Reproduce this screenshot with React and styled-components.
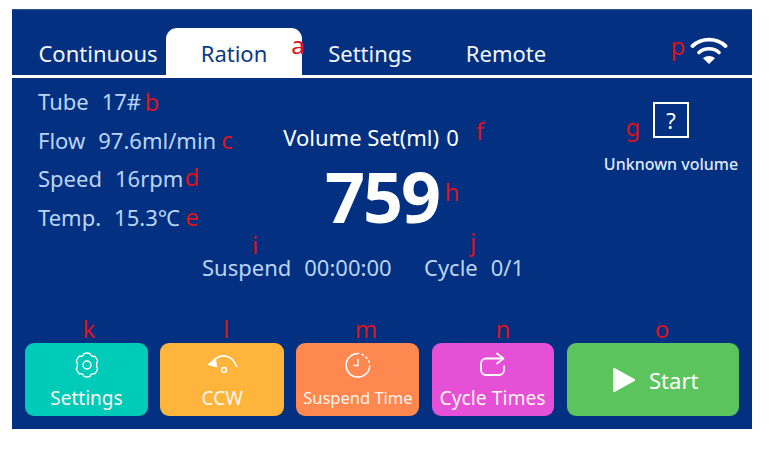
import React from 'react';
import styled, { createGlobalStyle } from 'styled-components';

const Global = createGlobalStyle`
  html, body { margin: 0; padding: 0; background: #fff; }
  body { font-family: "Noto Sans", "Noto Sans CJK SC", sans-serif; }
`;
const Screen = styled.div`
  position: relative; box-sizing: border-box; width: 740px; height: 420px; margin: 9px 0 0 12px;
  background: #033080; border-top: 1px solid #2c5590; display: flex; flex-direction: column; overflow: hidden;
`;
const TabBar = styled.div`
  box-sizing: border-box; display: flex; align-items: flex-end; padding-left: 18px;
  border-bottom: 3px solid #fff; height: 68px; flex: none;
`;
const Tab = styled.div`
  width: 136px; height: 47px; display: flex; align-items: center; justify-content: center;
  font-size: 22px; padding-top: 3px; box-sizing: border-box;
  color: ${p => (p.$active ? '#0b3a85' : '#f2f6fc')};
  background: ${p => (p.$active ? '#fff' : 'transparent')};
  border-radius: 11px 11px 0 0;
`;
const WifiSlot = styled.div`
  margin-left: auto; margin-right: 24px; align-self: flex-start; margin-top: 27px; line-height: 0;
`;
const Body = styled.div`
  flex: 1; display: flex; flex-direction: column; min-height: 0;
`;
const Top = styled.div`
  display: grid; grid-template-columns: 213px 240px 1fr; padding: 9px 0 0 26px; height: 155px; box-sizing: border-box;
`;
const InfoList = styled.div`
  display: flex; flex-direction: column; gap: 10.7px;
`;
const InfoRow = styled.div`
  height: 28px; line-height: 28px; font-size: 22px; color: #bcd4f5; display: flex; gap: 13px; white-space: nowrap;
`;
const Center = styled.div`
  display: flex; flex-direction: column; align-items: center; padding-top: 36px;
`;
const VolumeLine = styled.div`
  font-size: 22px; line-height: 28px; color: #fff; white-space: nowrap; display: flex; gap: 7px;
`;
const Big = styled.div`
  font-size: 70px; line-height: 80px; font-weight: 700; color: #fff; margin: 5px 0 0 22px; letter-spacing: -2px;
`;
const Unknown = styled.div`
  display: flex; flex-direction: column; align-items: center; padding-top: 15px; margin-left: 110px; width: 140px;
`;
const QBox = styled.div`
  width: 36px; height: 36px; flex: none; box-sizing: border-box; border: 2px solid #fff; color: #fff; font-size: 22px;
  display: flex; align-items: center; justify-content: center;
`;
const UnknownLabel = styled.div`
  font-size: 16px; font-weight: 500; line-height: 22px; color: #dfeafb; margin-top: 15px; white-space: nowrap;
`;
const Status = styled.div`
  display: flex; padding-left: 190px; margin-top: 20px; font-size: 22px; line-height: 28px; color: #bcd4f5; white-space: nowrap;
`;
const StatusItem = styled.div`
  display: flex; gap: 13px; width: ${p => p.$w}px;
`;
const Buttons = styled.div`
  margin-top: auto; padding: 0 13px 13px; display: grid; grid-template-columns: 123px 124px 123px 122px 173px; gap: 12.2px;
`;
const ActionButton = styled.div`
  height: 73px; border-radius: 9px; background: ${p => p.$bg}; color: #fdf6ee; display: flex; flex-direction: column;
  align-items: center; justify-content: flex-start; padding-top: 9px; box-sizing: border-box; white-space: nowrap;
`;
const IconSlot = styled.div`
  height: 26px; line-height: 0;
`;
const ButtonLabel = styled.div`
  font-size: ${p => p.$size || 19}px; line-height: 26px; margin-top: 7px;
`;
const StartButton = styled.div`
  height: 73px; border-radius: 9px; background: #5cc45c; color: #fff; display: flex; align-items: center; justify-content: center;
  gap: 13px; font-size: 22px; padding-left: 5px; margin-left: 1px; box-sizing: border-box;
`;
const Mark = styled.span`
  position: absolute; left: ${p => p.$x}px; top: ${p => p.$y}px; transform: translate(-50%, calc(-50% - 1.5px));
  color: #d9141e; font-size: 24px; line-height: 1; font-family: "Noto Sans", sans-serif;
`;

const Wifi = () => (
  <svg width="38" height="28" viewBox="0 0 38 28" fill="none" stroke="#fff" strokeLinecap="round">
    <path d="M2.5 9C11.5 .5 26.5 .5 35.5 9" strokeWidth="3.8" />
    <path d="M9 15.5C14.5 10.5 23.5 10.5 29 15.5" strokeWidth="3.6" />
    <path d="M19 27L13 21.2C16.5 18.4 21.5 18.4 25 21.2Z" fill="#fff" stroke="none" />
  </svg>
);
const Gear = () => (
  <svg width="26" height="26" viewBox="0 0 26 26" fill="none" stroke="#fff" strokeWidth="1.4" strokeLinejoin="round">
    <path d="M10 1.6C11.5 1 14.5 1 16 1.6C16.4 3.6 18.6 4.8 20.6 4.2C21.8 5.2 23.2 7.6 23.6 9.2C22.2 10.6 22.2 15.4 23.6 16.8C23.2 18.4 21.8 20.8 20.6 21.8C18.6 21.2 16.4 22.4 16 24.4C14.5 25 11.5 25 10 24.4C9.6 22.4 7.4 21.2 5.4 21.8C4.2 20.8 2.8 18.4 2.4 16.8C3.8 15.4 3.8 10.6 2.4 9.2C2.8 7.6 4.2 5.2 5.4 4.2C7.4 4.8 9.6 3.6 10 1.6Z" />
    <circle cx="13" cy="13" r="4" />
  </svg>
);
const Ccw = () => (
  <svg width="34" height="26" viewBox="0 0 34 26" fill="none" stroke="#fff">
    <path d="M9 8C16 1.5 27 2 32 15" strokeWidth="1.6" />
    <path d="M3 12.5L10.5 6.5L11.5 15Z" fill="#fff" stroke="#fff" strokeWidth="1" strokeLinejoin="round" />
    <circle cx="19" cy="18" r="2.4" strokeWidth="1.5" />
  </svg>
);
const Clock = () => (
  <svg width="26" height="26" viewBox="0 0 26 26" fill="none" stroke="#fff" strokeWidth="1.6" strokeLinecap="round">
    <path d="M13.5 1.5A11.8 11.8 0 1 0 24.7 14" />
    <path d="M17 2.3L18.2 3M21 5.2L21.8 6.2M23.8 9L24.2 10.2" />
    <path d="M13 7.5V13.5H9" strokeWidth="1.4" />
  </svg>
);
const Cycle = () => (
  <svg width="27" height="26" viewBox="0 0 27 26" fill="none" stroke="#fff" strokeWidth="1.8" strokeLinejoin="round">
    <path d="M25 13.5v4.5a5 5 0 0 1-5 5H7a5 5 0 0 1-5-5v-6.5a5 5 0 0 1 5-5h17" />
    <path d="M18 1.5L24.5 6.5L18 11.5" strokeLinecap="round" />
  </svg>
);
const Play = () => (
  <svg width="24" height="26" viewBox="0 0 24 26">
    <path d="M2 2L22 13L2 24Z" fill="#fff" stroke="#fff" strokeWidth="2" strokeLinejoin="round" />
  </svg>
);

const info = [['Tube', '17#'], ['Flow', '97.6ml/min'], ['Speed', '16rpm'], ['Temp.', '15.3℃']];
const marks = [
  ['a', 286, 36], ['b', 140, 93], ['c', 215, 131], ['d', 180, 168], ['e', 180, 208], ['f', 468, 122],
  ['g', 621, 118], ['h', 440, 183], ['i', 243, 236], ['j', 461, 233], ['k', 77, 320], ['l', 214, 320],
  ['m', 354, 320], ['n', 491, 320], ['o', 650, 320], ['p', 666, 37],
];

export default function App() {
  return (
    <>
      <Global />
      <Screen>
        <TabBar>
          <Tab>Continuous</Tab>
          <Tab $active>Ration</Tab>
          <Tab>Settings</Tab>
          <Tab>Remote</Tab>
          <WifiSlot><Wifi /></WifiSlot>
        </TabBar>
        <Body>
          <Top>
            <InfoList>
              {info.map(([k, v]) => (
                <InfoRow key={k}><span>{k}</span><span>{v}</span></InfoRow>
              ))}
            </InfoList>
            <Center>
              <VolumeLine><span>Volume Set(ml)</span><span>0</span></VolumeLine>
              <Big>759</Big>
            </Center>
            <Unknown>
              <QBox>?</QBox>
              <UnknownLabel>Unknown volume</UnknownLabel>
            </Unknown>
          </Top>
          <Status>
            <StatusItem $w={222}><span>Suspend</span><span>00:00:00</span></StatusItem>
            <StatusItem $w={110}><span>Cycle</span><span>0/1</span></StatusItem>
          </Status>
          <Buttons>
            <ActionButton $bg="#00cbb9"><IconSlot><Gear /></IconSlot><ButtonLabel>Settings</ButtonLabel></ActionButton>
            <ActionButton $bg="#ffb43c"><IconSlot><Ccw /></IconSlot><ButtonLabel>CCW</ButtonLabel></ActionButton>
            <ActionButton $bg="#ff8750"><IconSlot><Clock /></IconSlot><ButtonLabel $size={16.5}>Suspend Time</ButtonLabel></ActionButton>
            <ActionButton $bg="#e650d6"><IconSlot><Cycle /></IconSlot><ButtonLabel $size={19.3}>Cycle Times</ButtonLabel></ActionButton>
            <StartButton><Play /><span>Start</span></StartButton>
          </Buttons>
        </Body>
        {marks.map(([c, x, y]) => <Mark key={c} $x={x} $y={y}>{c}</Mark>)}
      </Screen>
    </>
  );
}
